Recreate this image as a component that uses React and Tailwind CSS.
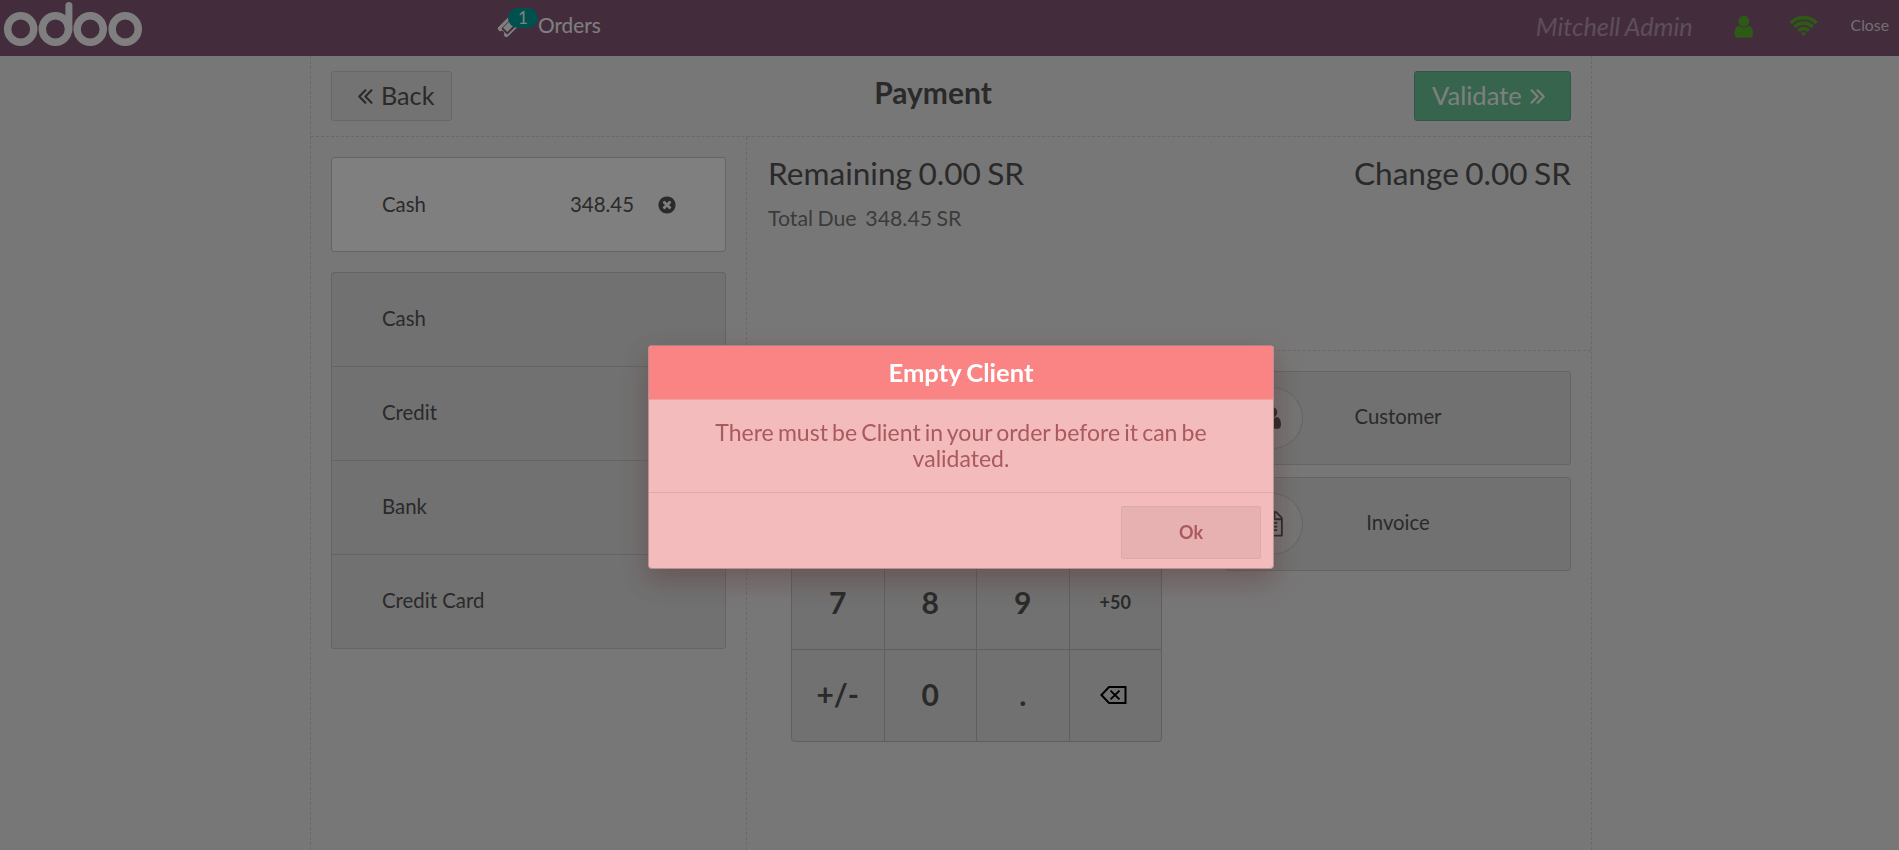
const USER_PATH =
  'M1536 1399q0 109-62.5 187t-150.5 78h-854q-88 0-150.5-78t-62.5-187q0-85 8.5-160.5t31.5-152 58.5-131 94-89 134.5-34.5q131 128 313 128t313-128q76 0 134.5 34.5t94 89 58.5 131 31.5 152 8.5 160.5zm-256-887q0 159-112.5 271.5t-271.5 112.5-271.5-112.5-112.5-271.5 112.5-271.5 271.5-112.5 271.5 112.5 112.5 271.5z';

function OdooLogo() {
  return (
    <svg className="block h-14 w-[144px]" viewBox="0 0 144 56" fill="none" stroke="#fff" strokeWidth="7.4">
      <ellipse cx="20.7" cy="29" rx="13.1" ry="13.3" />
      <ellipse cx="55.4" cy="29" rx="13.1" ry="13.3" />
      <ellipse cx="90.2" cy="29" rx="13.1" ry="13.3" />
      <ellipse cx="125.2" cy="29" rx="13.1" ry="13.3" />
      <path d="M68.9 5.5V30" strokeWidth="7" strokeLinecap="round" />
    </svg>
  );
}

function TicketIcon() {
  return (
    <svg className="block size-6" viewBox="0 0 1792 1792" fill="currentColor">
      <path d="M1024 452l316 316-572 572-316-316zM813 1495l682-682q19-19 19-45t-19-45l-362-362q-18-18-45-18t-45 18l-682 682q-19 19-19 45t19 45l362 362q18 18 45 18t45-18zM1702 794l-907 908q-37 37-90.5 37t-90.5-37l-126-126q56-56 56-136t-56-136-136-56-136 56l-125-126q-37-37-37-90.5t37-90.5l907-906q37-37 90.5-37t90.5 37l125 125q-56 56-56 136t56 136 136 56 136-56l126 125q37 37 37 90.5t-37 90.5z" />
    </svg>
  );
}

function UserIcon({ className }) {
  return (
    <svg className={className} viewBox="0 0 1792 1792" fill="currentColor">
      <path d={USER_PATH} />
    </svg>
  );
}

function WifiIcon() {
  return (
    <svg className="block h-[25.6px] w-[29.3px]" viewBox="0 0 2048 1792" fill="currentColor">
      <path d="M1024 1523q-20 0-93-73.5t-73-93.5q0-32 62.5-54t103.5-22 103.5 22 62.5 54q0 20-73 93.5t-93 73.5zm270-271q-2 0-40-25t-101.5-50-128.5-25-128.5 25-101 50-40.5 25q-18 0-93.5-75t-75.5-93q0-13 10-23 78-77 196-121t233-44 233 44 196 121q10 10 10 23 0 18-75.5 93t-93.5 75zm273-272q-11 0-23-8-136-105-252-154.5t-268-49.5q-85 0-170.5 22t-149 53-113.5 62-79 53-31 22q-17 0-92-75t-75-93q0-12 10-22 132-132 320-205t380-73 380 73 320 205q10 10 10 22 0 18-75 93t-92 75zm271-271q-11 0-22-9-179-157-371.5-236.5t-420.5-79.5-420.5 79.5-371.5 236.5q-11 9-22 9-17 0-92.5-75t-75.5-93q0-13 10-23 187-186 445-288t527-102 527 102 445 288q10 10 10 23 0 18-75.5 93t-92.5 75z" />
    </svg>
  );
}

function TimesCircleIcon() {
  return (
    <svg className="block size-5" viewBox="0 0 1792 1792" fill="currentColor">
      <path d="M1277 1122q0-26-19-45l-181-181 181-181q19-19 19-45 0-27-19-46l-90-90q-19-19-46-19-26 0-45 19l-181 181-181-181q-19-19-45-19-27 0-46 19l-90 90q-19 19-19 46 0 26 19 45l181 181-181 181q-19 19-19 45 0 27 19 46l90 90q19 19 46 19 26 0 45-19l181-181 181 181q19 19 45 19 27 0 46-19l90-90q19-19 19-46zm387-226q0 209-103 385.5t-279.5 279.5-385.5 103-385.5-103-279.5-279.5-103-385.5 103-385.5 279.5-279.5 385.5-103 385.5 103 279.5 279.5 103 385.5z" />
    </svg>
  );
}

function FileTextIcon() {
  return (
    <svg className="block size-[25.6px]" viewBox="0 0 1792 1792" fill="currentColor">
      <path d="M1596 380q28 28 48 76t20 88v1152q0 40-28 68t-68 28h-1344q-40 0-68-28t-28-68v-1600q0-40 28-68t68-28h896q40 0 88 20t76 48zm-444-244v376h376q-10-29-22-41l-313-313q-12-12-41-22zm384 1528v-1024h-416q-40 0-68-28t-28-68v-416h-768v1536h1280zm-1024-864q0-14 9-23t23-9h704q14 0 23 9t9 23v64q0 14-9 23t-23 9h-704q-14 0-23-9t-9-23v-64zm736 224q14 0 23 9t9 23v64q0 14-9 23t-23 9h-704q-14 0-23-9t-9-23v-64q0-14 9-23t23-9h704zm0 256q14 0 23 9t9 23v64q0 14-9 23t-23 9h-704q-14 0-23-9t-9-23v-64q0-14 9-23t23-9h704z" />
    </svg>
  );
}

function AngleDouble({ flip }) {
  return (
    <svg
      className={flip ? 'block size-[15px] -scale-x-100' : 'block size-[15px]'}
      viewBox="0 0 14 14"
      fill="none"
      stroke="currentColor"
      strokeWidth="2"
      strokeLinejoin="round"
      strokeLinecap="round"
    >
      <path d="M6.9 1.2L1.2 7l5.7 5.8M12.6 1.2L6.9 7l5.7 5.8" />
    </svg>
  );
}

function BackspaceIcon() {
  return (
    <svg className="mr-[3px] block h-[18px] w-[27px]" viewBox="0 0 27 18" fill="none" stroke="#000" strokeWidth="2">
      <path d="M9 1h16.5v16H9L1.4 9z" />
      <path d="M10.5 4.6l9 8.8M19.5 4.6l-9 8.8" />
    </svg>
  );
}

function TopBar() {
  return (
    <header className="flex h-14 shrink-0 items-start bg-[#875a7b] text-white">
      <OdooLogo />
      <div className="relative ml-[353px] mt-[14px]">
        <TicketIcon />
        <span className="absolute -top-[6px] left-[11px] flex h-5 w-[30px] items-center justify-center rounded-[10px] bg-[#00a09d] pb-px text-[17px] leading-5">
          1
        </span>
      </div>
      <span className="ml-[17px] mt-3 text-[20.8px] leading-[26px]">Orders</span>
      <div className="ml-auto flex items-start">
        <span className="mt-[10px] text-[25.3px] italic leading-8 text-[#bb9db2] [word-spacing:-1px]">Mitchell Admin</span>
        <span className="ml-[38px] mt-[14px] text-[#5ab52a]">
          <UserIcon className="block size-[25.6px]" />
        </span>
        <span className="ml-[33px] mt-[14px] text-[#5ab52a]">
          <WifiIcon />
        </span>
        <span className="ml-[32px] mr-[10px] mt-[14px] text-[15.8px] leading-[22px] text-[#e6dce3]">Close</span>
      </div>
    </header>
  );
}

const METHODS = ['Cash', 'Credit', 'Bank', 'Credit Card'];

function PaymentMethods() {
  return (
    <section className="w-[435px] shrink-0 px-5 pt-5">
      <div className="flex h-[95px] items-center rounded-[3px] border border-[#c8c8c8] bg-white pl-[50px] pr-[48px] text-[20.4px]">
        <span className="pb-px">Cash</span>
        <span className="ml-auto pb-px">348.45</span>
        <span className="ml-[23px]">
          <TimesCircleIcon />
        </span>
      </div>
      <div className="mt-5 rounded-[3px] border border-[#c8c8c8] bg-[#e2e2e2] text-[20.4px]">
        {METHODS.map((name, i) => (
          <div
            key={name}
            className={
              i < METHODS.length - 1
                ? 'flex h-[94px] items-center border-b border-[#c8c8c8] pb-[2px] pl-[50px]'
                : 'flex h-[93px] items-center pb-[2px] pl-[50px]'
            }
          >
            {name}
          </div>
        ))}
      </div>
    </section>
  );
}

// The two upper rows lie under the dialog and carry no label.
const KEYS = ['', '', '', '', '', '', '', '', '7', '8', '9', '+50', '+/-', '0', '.', 'back'];

function Numpad() {
  return (
    <div className="grid h-[371px] w-[371px] shrink-0 grid-cols-4 grid-rows-4 gap-px overflow-hidden rounded-[4px] border border-[#bfbfbf] bg-[#bfbfbf]">
      {KEYS.map((k, i) => (
        <div
          key={i}
          className={
            k === '+50'
              ? 'flex items-center justify-center bg-[#e2e2e2] pb-px text-[18px] font-bold'
              : 'flex items-center justify-center bg-[#e2e2e2] pb-px text-[30px] font-bold'
          }
        >
          {k === 'back' ? <BackspaceIcon /> : k}
        </div>
      ))}
    </div>
  );
}

function OptionButton({ icon, label }) {
  return (
    <div className="relative flex h-[94px] items-center justify-center rounded-[3px] border border-[#c8c8c8] bg-[#e2e2e2] pb-[3px] text-[20.3px]">
      <span className="absolute left-[15px] top-[15px] flex size-[62px] items-center justify-center rounded-full border border-[#c8c8c8] bg-[#eae8e8]">
        {icon}
      </span>
      {label}
    </div>
  );
}

function PaymentDetails() {
  return (
    <section className="flex flex-1 flex-col border-l border-dashed border-[#d4d2d2]">
      <div className="h-[214px] shrink-0 border-b border-dashed border-[#d4d2d2] pl-[21px] pr-5 pt-[15px]">
        <div className="flex justify-between text-[31.6px] leading-[42px] [word-spacing:-1.7px]">
          <span>Remaining 0.00 SR</span>
          <span>Change 0.00 SR</span>
        </div>
        <div className="mt-[10px] whitespace-pre text-[21.3px] leading-7 text-[#777] [word-spacing:-1.1px]">
          Total Due  348.45 SR
        </div>
      </div>
      <div className="flex pt-5 pr-5">
        <div className="ml-[44px]">
          <Numpad />
        </div>
        <div className="ml-[63px] flex flex-1 flex-col gap-3">
          <OptionButton icon={<UserIcon className="block size-[25.6px]" />} label="Customer" />
          <OptionButton icon={<FileTextIcon />} label="Invoice" />
        </div>
      </div>
    </section>
  );
}

function Dialog() {
  return (
    <div className="fixed inset-0 flex items-start justify-center bg-black/50 pt-[345px] pl-[23px]">
      <div className="flex h-[224px] w-[626px] flex-col overflow-hidden rounded-[4px] border border-[#b79292] border-t-[#a58585] bg-[#f3bbbb] text-center text-[#a95a5e] shadow-[0_11px_28px_rgba(90,45,45,0.4)]">
        <div className="h-[54px] shrink-0 border-b border-[#f0a0a0] bg-[#fa8383] text-[25.6px] font-bold leading-[53px] text-white [word-spacing:-1px]">
          Empty Client
        </div>
        <p className="h-[93px] shrink-0 border-b border-[#dcaaaa] px-[60px] pt-[19px] text-[23px] leading-[26px] [word-spacing:-1.7px]">
          There must be Client in your order before it can be validated.
        </p>
        <div className="flex justify-end pr-3 pt-[13px]">
          <div className="h-[53px] w-[140px] rounded-[2px] border border-[#dba9a9] bg-[#e7b1b1] text-[18px] font-bold leading-[50px]">
            Ok
          </div>
        </div>
      </div>
    </div>
  );
}

export default function App() {
  return (
    <div className="flex h-[850px] w-full flex-col overflow-hidden bg-[#f0eeee] font-['Lato',sans-serif] text-[#555]">
      <TopBar />
      <main className="ml-[310px] flex w-[1282px] flex-1 flex-col border-x border-dashed border-[#d4d2d2]">
        <div className="flex h-[81px] shrink-0 items-start border-b border-dashed border-[#d4d2d2] px-5 pt-[15px]">
          <div className="flex h-[50px] w-[121px] items-center rounded-[3px] border border-[#cfcfcf] bg-[#e6e6e6] pl-[26px] text-[25.2px]">
            <AngleDouble />
            <span className="ml-[8px] pb-px">Back</span>
          </div>
          <h1 className="flex-1 pt-px text-center text-[30px] font-bold leading-[40px]">Payment</h1>
          <div className="flex h-[50px] w-[157px] items-center rounded-[3px] border border-[#64af8a] bg-[#6ec89b] pl-[17px] text-[25.6px] text-white">
            <span className="pb-px">Validate</span>
            <span className="ml-[8px]">
              <AngleDouble flip />
            </span>
          </div>
        </div>
        <div className="flex flex-1">
          <PaymentMethods />
          <PaymentDetails />
        </div>
      </main>
      <Dialog />
    </div>
  );
}
